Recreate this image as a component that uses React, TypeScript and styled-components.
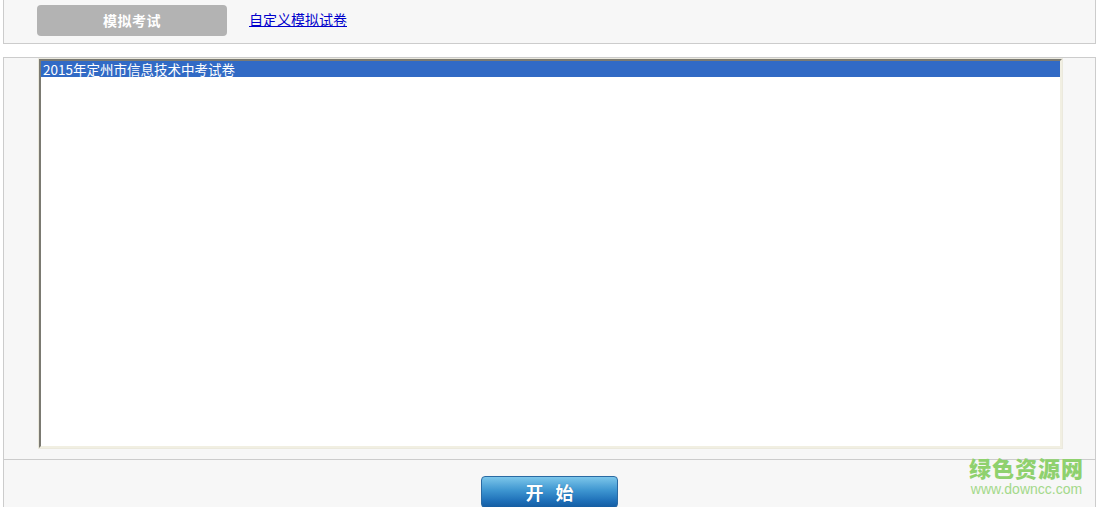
import React from "react";
import styled, { createGlobalStyle } from "styled-components";

const Global = createGlobalStyle`
  html, body { margin: 0; padding: 0; background: #ffffff; }
  body { font-family: "Liberation Sans", "Noto Sans CJK SC", sans-serif; font-size: 12px; }
`;

const Page = styled.div`
  position: relative;
  width: 1105px;
  height: 507px;
  overflow: hidden;
`;

const TopBar = styled.div`
  margin: 0 9px 0 3px;
  height: 44px;
  box-sizing: border-box;
  border: 1px solid #cccccc;
  border-top: none;
  background: #f7f7f7;
  display: flex;
  align-items: flex-start;
  padding: 5px 0 0 33px;
`;

const TabButton = styled.div`
  width: 190px;
  height: 31px;
  border-radius: 4px;
  background: #b3b3b3;
  color: #ffffff;
  font-family: "Noto Sans CJK SC", sans-serif;
  font-weight: bold;
  font-size: 14px;
  letter-spacing: 0.5px;
  display: flex;
  align-items: center;
  justify-content: center;
  padding-bottom: 2px;
  box-sizing: border-box;
`;

const TabLink = styled.a`
  margin: 6px 0 0 22px;
  color: #0000cc;
  font-family: "Noto Sans CJK SC", sans-serif;
  font-size: 14px;
  line-height: 17px;
  text-decoration: underline;
  cursor: pointer;
`;

const MainPanel = styled.div`
  margin: 13px 9px 0 3px;
  border: 1px solid #cccccc;
  border-bottom: none;
  background: #f7f7f7;
  height: 460px;
  box-sizing: border-box;
  display: flex;
  flex-direction: column;
`;

const ListArea = styled.div`
  padding: 0 32px 10px 34px;
  border-bottom: 1px solid #cccccc;
`;

const ListOuter = styled.div`
  border: 1px solid #ebe9dd;
  background: #ffffff;
`;

const ListBox = styled.div`
  height: 385px;
  border-top: 2px solid #7b7a72;
  border-left: 2px solid #7b7a72;
  border-right: 2px solid #f1efe2;
  border-bottom: 2px solid #f1efe2;
  background: #ffffff;
  padding: 0;
`;

const ListItem = styled.div<{ selected?: boolean }>`
  height: 16px;
  line-height: 16px;
  padding-left: 2px;
  font-family: "Noto Sans CJK SC", sans-serif;
  font-size: 13.5px;
  white-space: nowrap;
  color: ${(p) => (p.selected ? "#ffffff" : "#000000")};
  background: ${(p) => (p.selected ? "#316ac5" : "transparent")};
`;

const Footer = styled.div`
  display: flex;
  justify-content: center;
  padding: 16px 0 0 0;
`;

const StartButton = styled.button`
  width: 137px;
  height: 32px;
  border: 1px solid #2a6aa3;
  border-radius: 4px;
  background: linear-gradient(to bottom, #7cc6ea 0%, #3d95d0 45%, #1e6fb8 80%, #155da3 100%);
  color: #ffffff;
  font-family: "Noto Sans CJK SC", sans-serif;
  font-weight: bold;
  font-size: 18px;
  letter-spacing: 12px;
  text-indent: 12px;
  padding: 0;
  display: flex;
  align-items: center;
  justify-content: center;
  text-shadow: 0 0 1px rgba(0, 40, 90, 0.4);
  cursor: pointer;
`;

const Watermark = styled.div`
  position: absolute;
  right: 21px;
  top: 452px;
  display: flex;
  flex-direction: column;
  align-items: center;
  pointer-events: none;
`;

const WatermarkTitle = styled.div`
  color: #8fd16e;
  font-family: "Noto Sans CJK SC", sans-serif;
  font-weight: 900;
  font-size: 22px;
  line-height: 30px;
  letter-spacing: 1px;
`;

const WatermarkUrl = styled.div`
  color: #a3d98a;
  font-family: "Liberation Sans", sans-serif;
  font-size: 14px;
  line-height: 14px;
`;

export default function App() {
  return (
    <Page>
      <Global />
      <TopBar>
        <TabButton>模拟考试</TabButton>
        <TabLink>自定义模拟试卷</TabLink>
      </TopBar>
      <MainPanel>
        <ListArea>
          <ListOuter>
            <ListBox>
              <ListItem selected>2015年定州市信息技术中考试卷</ListItem>
            </ListBox>
          </ListOuter>
        </ListArea>
        <Footer>
          <StartButton>开始</StartButton>
        </Footer>
      </MainPanel>
      <Watermark>
        <WatermarkTitle>绿色资源网</WatermarkTitle>
        <WatermarkUrl>www.downcc.com</WatermarkUrl>
      </Watermark>
    </Page>
  );
}
